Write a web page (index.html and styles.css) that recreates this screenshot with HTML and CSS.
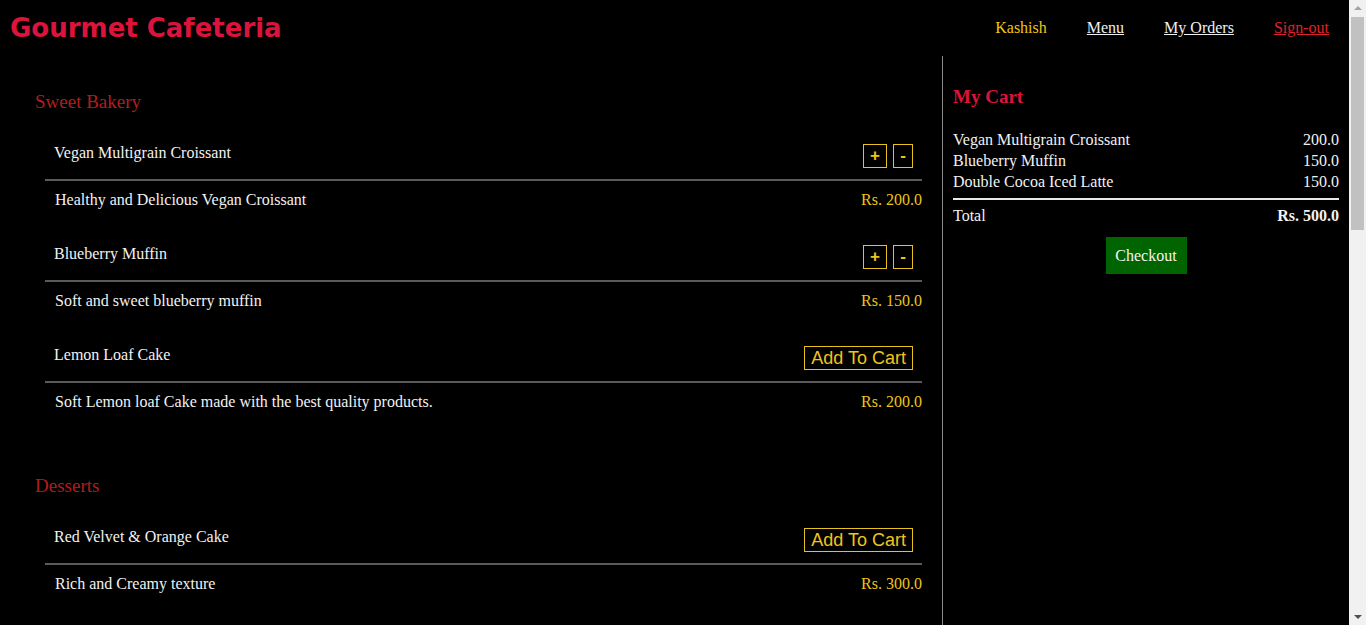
FILE: index.html
```html
<!DOCTYPE html>
<html lang="en">
<head>
<meta charset="utf-8">
<title>Gourmet Cafeteria</title>
<link rel="stylesheet" href="styles.css">
</head>
<body>
<header class="topbar">
  <h1 class="brand">Gourmet Cafeteria</h1>
  <nav class="nav">
    <span class="nav-user">Kashish</span>
    <a class="nav-link" href="#">Menu</a>
    <a class="nav-link" href="#">My Orders</a>
    <a class="nav-link nav-signout" href="#">Sign-out</a>
  </nav>
</header>
<main class="layout">
  <div class="menu-col">
    <section class="category">
      <h2 class="category-title">Sweet Bakery</h2>
      <div class="item">
        <div class="item-head">
          <span class="item-name">Vegan Multigrain Croissant</span>
          <div class="qty"><button class="qty-btn">+</button><button class="qty-btn">-</button></div>
        </div>
        <div class="item-body">
          <span class="item-desc">Healthy and Delicious Vegan Croissant</span>
          <span class="item-price">Rs. 200.0</span>
        </div>
      </div>
      <div class="item">
        <div class="item-head">
          <span class="item-name">Blueberry Muffin</span>
          <div class="qty"><button class="qty-btn">+</button><button class="qty-btn">-</button></div>
        </div>
        <div class="item-body">
          <span class="item-desc">Soft and sweet blueberry muffin</span>
          <span class="item-price">Rs. 150.0</span>
        </div>
      </div>
      <div class="item">
        <div class="item-head">
          <span class="item-name">Lemon Loaf Cake</span>
          <button class="add-btn">Add To Cart</button>
        </div>
        <div class="item-body">
          <span class="item-desc">Soft Lemon loaf Cake made with the best quality products.</span>
          <span class="item-price">Rs. 200.0</span>
        </div>
      </div>
    </section>
    <section class="category">
      <h2 class="category-title">Desserts</h2>
      <div class="item">
        <div class="item-head">
          <span class="item-name">Red Velvet &amp; Orange Cake</span>
          <button class="add-btn">Add To Cart</button>
        </div>
        <div class="item-body">
          <span class="item-desc">Rich and Creamy texture</span>
          <span class="item-price">Rs. 300.0</span>
        </div>
      </div>
      <div class="item">
        <div class="item-head">
          <span class="item-name">Chocolate Brownie</span>
          <button class="add-btn">Add To Cart</button>
        </div>
        <div class="item-body">
          <span class="item-desc">Fudgy brownie with dark chocolate chunks</span>
          <span class="item-price">Rs. 120.0</span>
        </div>
      </div>
      <div class="item">
        <div class="item-head">
          <span class="item-name">Tiramisu Cup</span>
          <button class="add-btn">Add To Cart</button>
        </div>
        <div class="item-body">
          <span class="item-desc">Classic Italian coffee dessert</span>
          <span class="item-price">Rs. 250.0</span>
        </div>
      </div>
    </section>
    <section class="category">
      <h2 class="category-title">Beverages</h2>
      <div class="item">
        <div class="item-head">
          <span class="item-name">Double Cocoa Iced Latte</span>
          <div class="qty"><button class="qty-btn">+</button><button class="qty-btn">-</button></div>
        </div>
        <div class="item-body">
          <span class="item-desc">Chilled latte with a double shot of cocoa</span>
          <span class="item-price">Rs. 150.0</span>
        </div>
      </div>
      <div class="item">
        <div class="item-head">
          <span class="item-name">Masala Chai</span>
          <button class="add-btn">Add To Cart</button>
        </div>
        <div class="item-body">
          <span class="item-desc">Spiced Indian tea brewed with milk</span>
          <span class="item-price">Rs. 60.0</span>
        </div>
      </div>
      <div class="item">
        <div class="item-head">
          <span class="item-name">Fresh Lime Soda</span>
          <button class="add-btn">Add To Cart</button>
        </div>
        <div class="item-body">
          <span class="item-desc">Sweet and salty refreshing soda</span>
          <span class="item-price">Rs. 80.0</span>
        </div>
      </div>
    </section>
  </div>
  <aside class="cart-col">
    <h2 class="cart-title">My Cart</h2>
    <div class="cart-list">
      <div class="cart-row"><span>Vegan Multigrain Croissant</span><span>200.0</span></div>
      <div class="cart-row"><span>Blueberry Muffin</span><span>150.0</span></div>
      <div class="cart-row"><span>Double Cocoa Iced Latte</span><span>150.0</span></div>
    </div>
    <div class="cart-total"><span>Total</span><strong>Rs. 500.0</strong></div>
    <div class="cart-actions"><button class="checkout-btn">Checkout</button></div>
  </aside>
</main>
<div class="scrollbar" aria-hidden="true">
  <span class="sb-arrow sb-up"></span>
  <span class="sb-thumb"></span>
  <span class="sb-arrow sb-down"></span>
</div>
</body>
</html>
```
FILE: styles.css
```css
html, body {
  margin: 0;
  padding: 0;
  background: #000;
  color: #f2f2f2;
  font-family: "Liberation Serif", "Times New Roman", serif;
  font-size: 16px;
}

body {
  padding-right: 17px;
}

.topbar {
  display: flex;
  align-items: center;
  justify-content: space-between;
  height: 56px;
  padding: 0 20px 0 10px;
}

.brand {
  margin: 0;
  font-family: "DejaVu Sans", sans-serif;
  font-weight: bold;
  font-size: 26px;
  color: #dc143c;
  line-height: 1;
}

.nav {
  display: flex;
  gap: 40px;
  align-items: center;
  font-size: 16px;
}

.nav-user {
  color: #f0c419;
}

.nav-link {
  color: #f0f0f0;
  text-decoration: underline;
}

.nav-signout {
  color: #e0202e;
}

.layout {
  display: flex;
  align-items: stretch;
  min-height: 1400px;
}

.menu-col {
  width: 943px;
  box-sizing: border-box;
  border-right: 1px solid #8a8a8a;
  padding: 0 20px 40px 0;
  flex: none;
}

.category-title {
  margin: 65px 0 22px 35px;
  font-size: 19px;
  font-weight: normal;
  line-height: 22px;
  color: #b01e1e;
}

.category:first-child .category-title {
  margin-top: 35px;
}

.item {
  margin: 0 0 28px 45px;
}

.item-head {
  display: flex;
  align-items: center;
  justify-content: space-between;
  height: 24px;
  padding: 9px 9px 11px 9px;
  border-bottom: 2px solid #5a5a5a;
}

.item-name {
  padding-bottom: 7px;
  line-height: 17px;
}

.qty {
  display: flex;
  gap: 6px;
}

.qty-btn {
  width: 24px;
  height: 24px;
  padding: 0;
  background: #000;
  border: 1px solid #e8c21c;
  color: #f0c419;
  font-family: "Liberation Sans", Arial, sans-serif;
  font-weight: bold;
  font-size: 17px;
  line-height: 20px;
}

.qty-btn + .qty-btn {
  width: 20px;
}

.add-btn {
  height: 24px;
  padding: 0 6px;
  background: #000;
  border: 1px solid #e8c21c;
  color: #f0c419;
  font-family: "Liberation Sans", Arial, sans-serif;
  font-size: 18px;
  line-height: 22px;
}

.item-body {
  display: flex;
  justify-content: space-between;
  padding: 10px 0 0 10px;
  line-height: 17px;
}

.item-price {
  color: #f0c419;
}

.cart-col {
  flex: 1;
  padding: 0 10px;
}

.cart-title {
  margin: 30px 0 21px 0;
  font-size: 19px;
  line-height: 22px;
  font-weight: bold;
  color: #dc143c;
}

.cart-list {
  border-bottom: 2px solid #e8e8e8;
  padding-bottom: 6px;
}

.cart-row {
  display: flex;
  justify-content: space-between;
  line-height: 21px;
}

.cart-total {
  display: flex;
  justify-content: space-between;
  line-height: 21px;
  padding-top: 5px;
}

.cart-actions {
  display: flex;
  justify-content: center;
  padding-top: 11px;
}

.checkout-btn {
  width: 81px;
  height: 37px;
  background: #006400;
  border: none;
  color: #f5f5f5;
  font-family: "Liberation Serif", "Times New Roman", serif;
  font-size: 16px;
  padding: 0;
}

.scrollbar {
  position: fixed;
  top: 0;
  right: 0;
  width: 17px;
  height: 100vh;
  background: #f1f1f1;
  display: flex;
  flex-direction: column;
  align-items: center;
}

.sb-arrow {
  width: 0;
  height: 0;
  border-left: 4px solid transparent;
  border-right: 4px solid transparent;
}

.sb-up {
  margin-top: 6px;
  border-bottom: 4px solid #a3a3a3;
}

.sb-thumb {
  margin-top: 7px;
  width: 13px;
  height: 213px;
  background: #c1c1c1;
}

.sb-down {
  margin-top: auto;
  margin-bottom: 6px;
  border-top: 4px solid #505050;
}
```
